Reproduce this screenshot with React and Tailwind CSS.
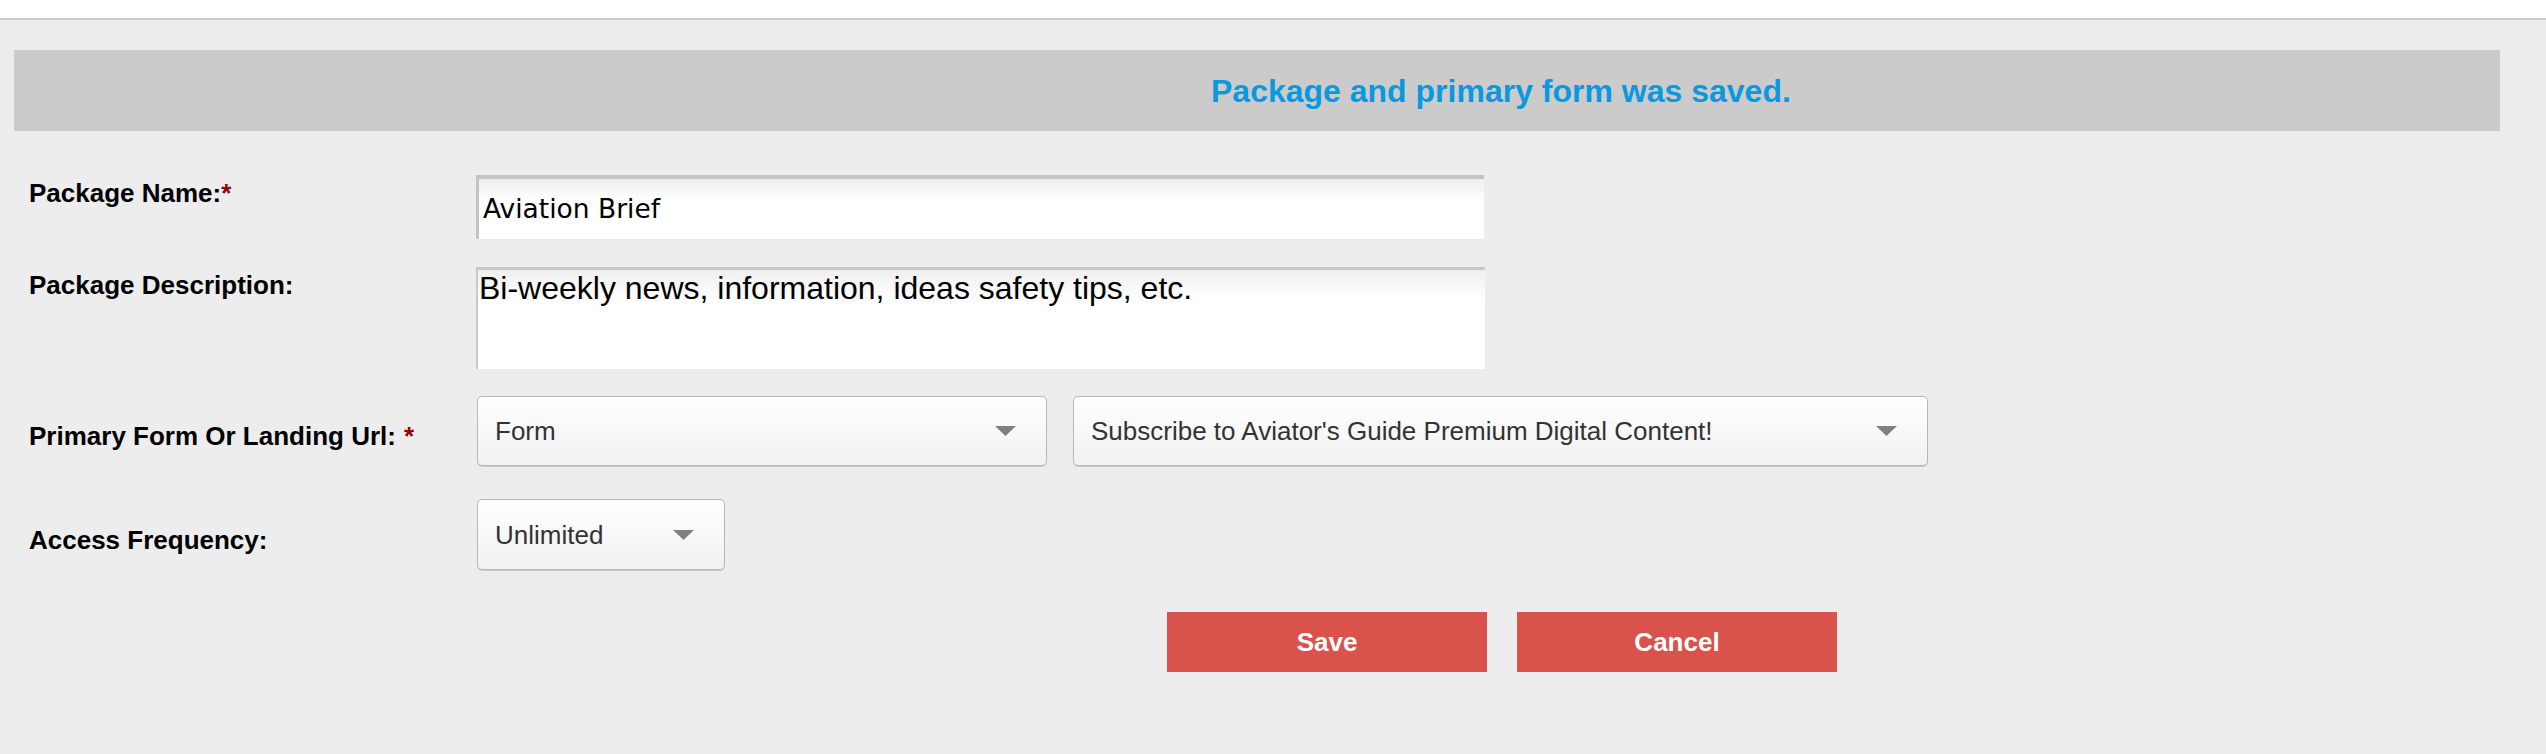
import React from "react";

function Arrow() {
  return (
    <svg width="21" height="10" viewBox="0 0 21 10" className="shrink-0">
      <polygon points="0,0 21,0 10.5,10" fill="#808080" />
    </svg>
  );
}

function Select({ value, className }) {
  return (
    <div
      className={
        "flex items-center justify-between rounded-[5px] border border-[#b7b7b7] shadow-[0_1px_0_#c9c9c9] bg-linear-to-b from-white to-[#f1f1f1] pl-[17px] pr-[30px] text-[26px] leading-[30px] text-[#333] " +
        className
      }
    >
      <span>{value}</span>
      <Arrow />
    </div>
  );
}

function Label({ children, star, starGap, className }) {
  return (
    <div className={"w-[447px] shrink-0 text-[26px] leading-[30px] font-bold text-black " + className}>
      {children}
      {star && <span className={"text-[#9b0000] " + (starGap ? "ml-[8px]" : "")}>*</span>}
    </div>
  );
}

export default function App() {
  return (
    <div className="min-h-[754px] w-full bg-[#ededed] font-['Liberation_Sans',Arial,sans-serif]">
      <div className="h-[20px] bg-white border-b-2 border-[#cccccc]" />
      <div className="pt-[30px] pl-[14px]">
        <div className="flex h-[81px] w-[2486px] items-center bg-[#cbcbcb] pl-[1197px] text-[32px] font-bold text-[#0a98df]">
          Package and primary form was saved.
        </div>
      </div>

      <div className="pl-[29px] pt-[44px]">
        {/* Row 1 */}
        <div className="flex items-start">
          <Label star className="pt-[3px]">Package Name:</Label>
          <div className="flex h-[64px] w-[1008px] items-center border-t-4 border-l-[3px] border-[#c4c4c4] bg-linear-to-b from-[#eeeeee] to-white to-[35%] pl-[4px] font-['DejaVu_Sans',sans-serif] text-[26.5px] text-black">
            Aviation Brief
          </div>
        </div>

        {/* Row 2 */}
        <div className="mt-[28px] flex items-start">
          <Label className="pt-[3px]">Package Description:</Label>
          <div className="h-[102px] w-[1009px] border-t-[3px] border-l-2 border-[#c8c8c8] bg-linear-to-b from-[#efefef] to-white to-[30%] pl-[1px] text-[32px] leading-[37px] text-black">
            Bi-weekly news, information, ideas safety tips, etc.
          </div>
        </div>

        {/* Row 3 */}
        <div className="mt-[27px] flex items-start">
          <Label star starGap className="pt-[25px]">Primary Form Or Landing Url:</Label>
          <div className="ml-[1px] flex gap-[26px]">
            <Select value="Form" className="h-[70px] w-[570px]" />
            <Select value="Subscribe to Aviator's Guide Premium Digital Content!" className="h-[70px] w-[855px]" />
          </div>
        </div>

        {/* Row 4 */}
        <div className="mt-[33px] flex items-start">
          <Label className="pt-[26px]">Access Frequency:</Label>
          <div className="ml-[1px]">
            <Select value="Unlimited" className="h-[71px] w-[248px]" />
          </div>
        </div>

        {/* Buttons */}
        <div className="mt-[42px] flex gap-[30px] pl-[1138px]">
          <button className="flex h-[60px] w-[320px] items-center justify-center bg-[#d9534c] text-[26px] font-bold text-white">
            Save
          </button>
          <button className="flex h-[60px] w-[320px] items-center justify-center bg-[#d9534c] text-[26px] font-bold text-white">
            Cancel
          </button>
        </div>
      </div>
    </div>
  );
}
